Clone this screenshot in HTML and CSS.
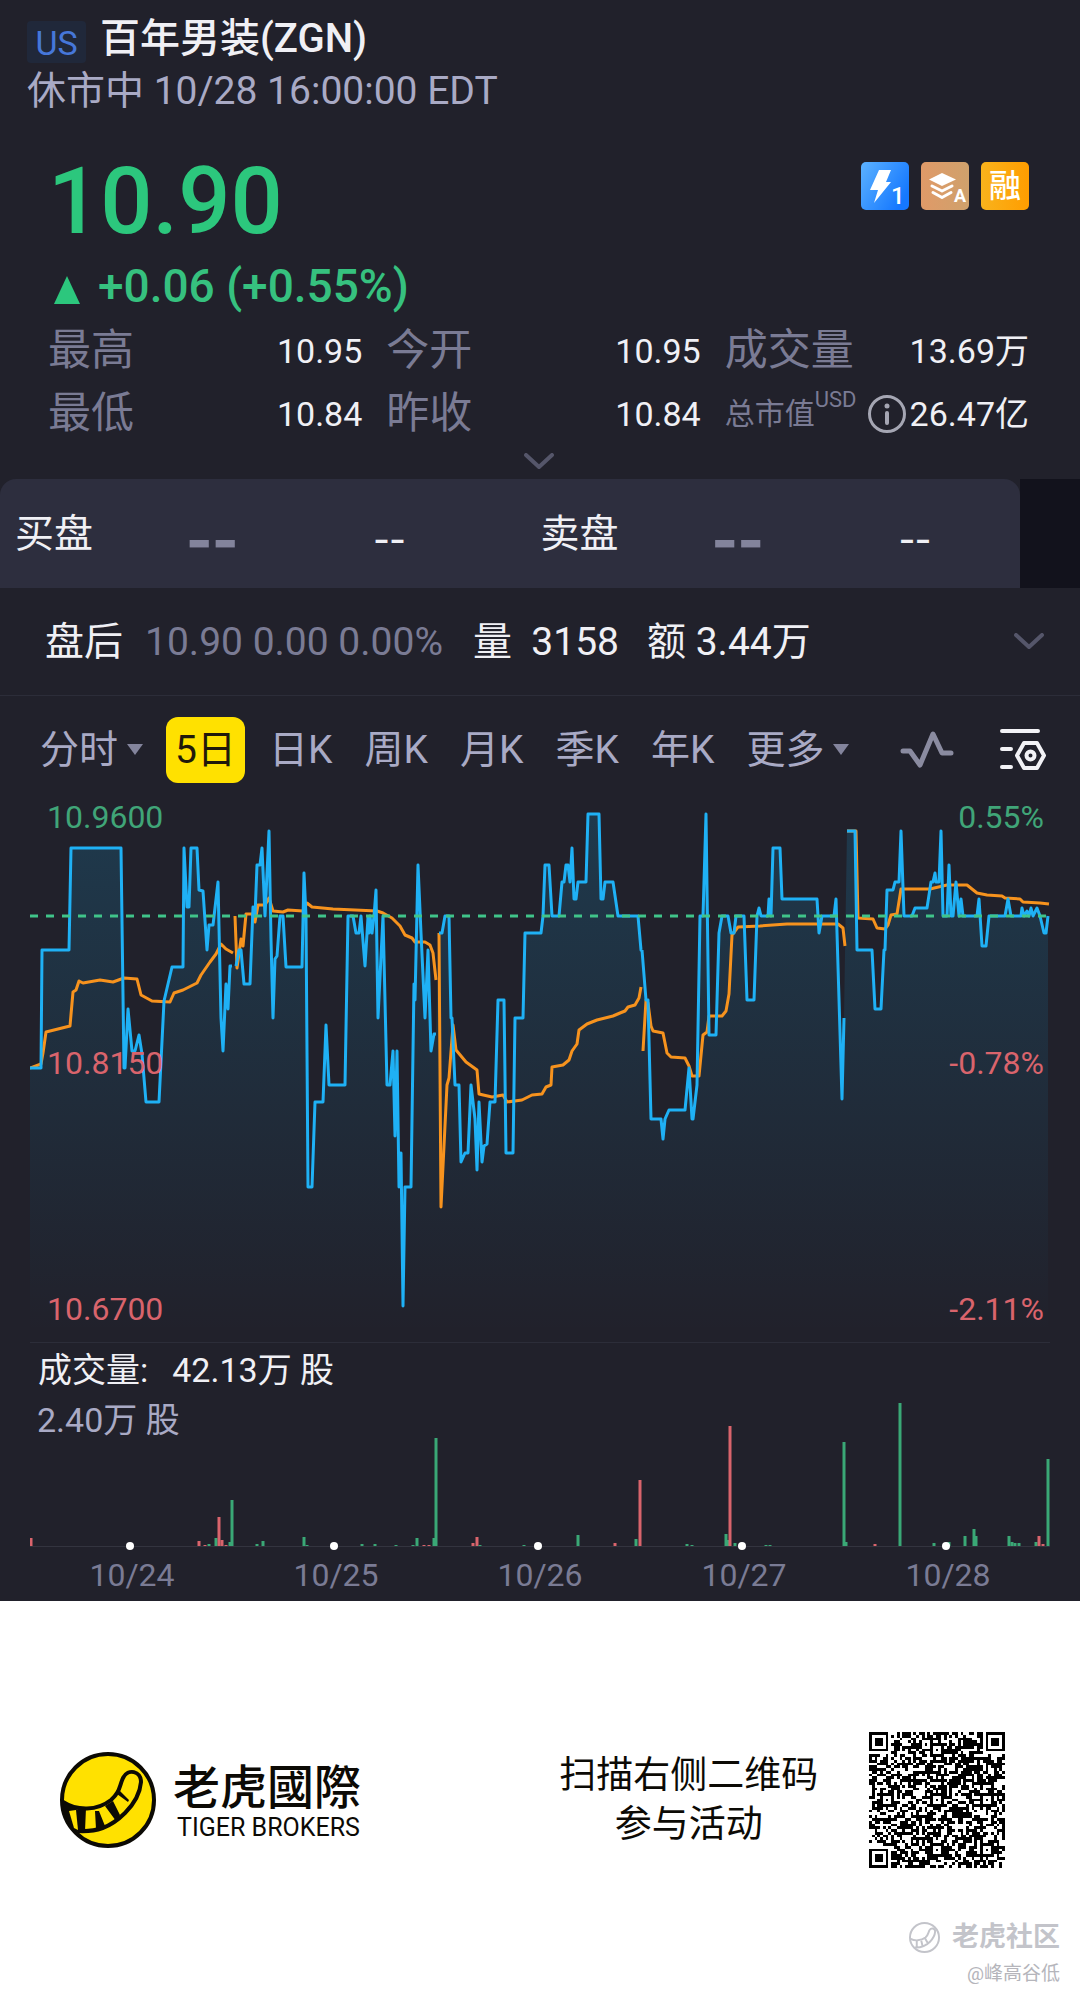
FILE: index.html
```
<!DOCTYPE html>
<html lang="zh-CN">
  <head>
    <meta charset="UTF-8" />
    <meta name="viewport" content="width=device-width, initial-scale=1" />
    <title>百年男装(ZGN)</title>
    <link rel="stylesheet" href="styles.css">
  </head>
  <body>
    <main class="stock">
      <!-- Name and market status -->
      <header class="stock-header">
        <div class="title-row">
          <span class="market">US</span>
          <h1>百年男装(ZGN)</h1>
        </div>
        <div class="status">休市中 10/28 16:00:00 EDT</div>
      </header>

      <!-- Quote -->
      <section class="quote">
        <div class="price-row">
          <div class="price">10.90</div>
          <div class="badges">
            <svg class="badge" viewBox="0 0 48 48">
              <defs>
                <linearGradient id="blue" x1="0" y1="0" x2="1" y2="0.6">
                  <stop offset="0" stop-color="#5cb2ff" />
                  <stop offset="1" stop-color="#1578ff" />
                </linearGradient>
              </defs>
              <rect width="48" height="48" rx="5" fill="url(#blue)" />
              <path d="M18 8h12l-5 12h5L13 41l4-13h-8z" fill="#fff" />
              <text x="30" y="42" font-size="24" font-weight="500" fill="#fff">1</text>
            </svg>
            <svg class="badge" viewBox="0 0 48 48">
              <defs>
                <linearGradient id="bronze" x1="0" y1="0" x2="1" y2="0">
                  <stop offset="0" stop-color="#e09a68" />
                  <stop offset="1" stop-color="#cfa16c" />
                </linearGradient>
              </defs>
              <rect width="48" height="48" rx="5" fill="url(#bronze)" />
              <path d="M21 11l14 6.5L21 24 8 17.5z" fill="#fff" />
              <path d="M11 24l10 5 10-5M12 30.500l9 5 9-5" fill="none" stroke="#fff" stroke-width="3" stroke-linecap="round" stroke-linejoin="round" />
              <text x="33" y="40" font-size="18" font-weight="700" fill="#fff">A</text>
            </svg>
            <span class="badge margin-badge">融</span>
          </div>
        </div>
        <div class="change"><span class="up"></span>+0.06 (+0.55%)</div>
        <dl class="stats">
          <div><dt>最高</dt><dd>10.95</dd></div>
          <div><dt>今开</dt><dd>10.95</dd></div>
          <div><dt>成交量</dt><dd>13.69万</dd></div>
          <div><dt>最低</dt><dd>10.84</dd></div>
          <div><dt>昨收</dt><dd>10.84</dd></div>
          <div>
            <dt class="small">总市值<sup>USD</sup></dt>
            <dd class="with-icon">
              <svg class="info" viewBox="0 0 40 40">
                <circle cx="20" cy="20" r="17.500" fill="none" stroke="#a5a6b3" stroke-width="3" />
                <circle cx="20" cy="12" r="2.500" fill="#a5a6b3" />
                <path d="M20 19v10" stroke="#a5a6b3" stroke-width="4" stroke-linecap="round" />
              </svg>26.47亿
            </dd>
          </div>
        </dl>
        <button class="expand" aria-label="展开">
          <svg class="chevron" viewBox="0 0 30 18"><path d="M2 2l13 12L28 2" /></svg>
        </button>
      </section>

      <!-- Bid / ask -->
      <section class="depth">
        <div class="depth-main">
          <div class="side"><span>买盘</span><b>--</b><i>--</i></div>
          <div class="side"><span>卖盘</span><b>--</b><i>--</i></div>
        </div>
      </section>

      <section class="after-hours">
        <span class="label">盘后</span>
        <span class="muted">10.90 0.00 0.00%</span>
        <span class="vol">量&nbsp; 3158</span>
        <span>额 3.44万</span>
        <button class="more" aria-label="更多">
          <svg class="chevron" viewBox="0 0 30 18"><path d="M2 2l13 12L28 2" /></svg>
        </button>
      </section>

      <nav class="tabs">
        <button class="drop">分时</button>
        <button class="active">5日</button>
        <button>日K</button>
        <button>周K</button>
        <button>月K</button>
        <button>季K</button>
        <button>年K</button>
        <button class="drop">更多</button>
        <div class="tools">
          <button aria-label="指标">
            <svg width="54" height="40" viewBox="0 0 54 40"><path d="M3 21h7l10 14L33 4l9 19h9" fill="none" stroke="#8a8ba0" stroke-width="5" stroke-linecap="round" stroke-linejoin="round" /></svg>
          </button>
          <button aria-label="设置">
            <svg width="48" height="44" viewBox="0 0 48 44" fill="none" stroke="#f2f2f6" stroke-width="4" stroke-linecap="round" stroke-linejoin="round">
              <path d="M3 3h36M3 21h9M3 39h9M25 15h13l7 12.500L38 40H25l-7-12.500z" />
              <circle cx="31.500" cy="27.500" r="4" />
            </svg>
          </button>
        </div>
      </nav>

      <!-- Five day chart -->
      <section class="chart">
        <svg class="plot" viewBox="30 806 1020 537">
          <defs>
            <linearGradient id="fade" gradientUnits="userSpaceOnUse" x1="0" y1="815" x2="0" y2="1335">
              <stop offset="0" stop-color="#13b0f0" stop-opacity="0.17" />
              <stop offset="1" stop-color="#13b0f0" stop-opacity="0" />
            </linearGradient>
          </defs>
          <g id="area"></g>
          <g id="average"></g>
          <g id="price"></g>
          <path class="baseline" d="M30 917H1049" />
        </svg>
        <span class="tick left top up-text">10.9600</span>
        <span class="tick left mid">10.8150</span>
        <span class="tick left bottom">10.6700</span>
        <span class="tick right top up-text">0.55%</span>
        <span class="tick right mid">-0.78%</span>
        <span class="tick right bottom">-2.11%</span>
      </section>

      <section class="volume">
        <div class="volume-total"><span>成交量:</span><span>42.13万 股</span></div>
        <div class="volume-max">2.40万 股</div>
        <svg id="bars" viewBox="30 1398 1020 152"></svg>
        <div class="dates">
          <span>10/24</span>
          <span>10/25</span>
          <span>10/26</span>
          <span>10/27</span>
          <span>10/28</span>
        </div>
      </section>
    </main>

    <footer class="share">
      <div class="brand">
        <svg class="logo" viewBox="0 0 96 96">
          <circle cx="48" cy="48" r="46" fill="#ffe100" stroke="#0c0a05" stroke-width="4" />
          <path d="M3 50C17 59 37 59 51 48C60 40 59 35 63 26C68 16 81 19 81 30C80 42 73 53 65 61C50 76 36 80 18 79" fill="none" stroke="#0c0a05" stroke-width="4" />
          <path d="M3 50l15 8 8 21-9 1C8 73 3 63 3 50z" fill="#0c0a05" />
          <path d="M9 59l7-1 2 20-4-2z" fill="#ffe100" />
          <path d="M18 56h8l-1 23h-7zM35 59l4 0 6 15-9 3zM45 54l8-5 7 14-4 6zM57 42l3-3 9 9-1 2z" fill="#0c0a05" />
        </svg>
        <div class="brand-name">
          <strong>老虎國際</strong>
          <span>TIGER BROKERS</span>
        </div>
      </div>
      <p class="scan">扫描右侧二维码<br>参与活动</p>
      <svg id="qr" viewBox="0 0 49 49" shape-rendering="crispEdges"></svg>
      <div class="watermark">
        <div class="community">
          <svg viewBox="0 0 96 96" fill="none" stroke="#c3c4ca" stroke-width="6">
            <circle cx="48" cy="48" r="45" />
            <path d="M5 52C17 59 37 59 51 48C60 40 59 35 63 26C68 16 81 19 81 30C80 42 73 53 65 61C50 76 36 80 18 79M24 57v20M38 58l4 16M50 51l8 14" />
          </svg>
          <strong>老虎社区</strong>
        </div>
        <span>@峰高谷低</span>
      </div>
    </footer>
    <script src="chart.js"></script>
  </body>
</html>
```
FILE: styles.css
```
* {
  box-sizing: border-box;
}

body {
  margin: 0;
  background-color: #fff;
  color: #f0f0f5;
  font-family: Roboto, 'Noto Sans CJK SC', sans-serif;
}

button {
  padding: 0;
  border: 0;
  background: none;
  color: inherit;
  font: inherit;
  cursor: pointer;
}

svg {
  display: block;
}

.stock {
  background-color: #21212b;
}

.stock-header {
  padding: 15px 27px 0;
}

.title-row {
  display: flex;
  align-items: center;
  height: 48px;
}

.market {
  width: 59px;
  height: 42px;
  margin: 6px 14px 0 0;
  border-radius: 4px;
  background-color: #20283a;
  color: #4677d9;
  font-size: 34px;
  line-height: 44px;
  text-align: center;
}

h1 {
  margin: 0;
  font-size: 40px;
  font-weight: 500;
  line-height: 48px;
}

.status {
  color: #a9aac5;
  font-size: 39px;
  line-height: 56px;
}

/* Quote */
.quote {
  padding: 33px 51px 0 48px;
}

.price-row {
  display: flex;
  justify-content: space-between;
}

.price {
  color: #2cc77d;
  font-size: 92px;
  font-weight: 500;
  line-height: 100px;
}

.badges {
  display: flex;
  gap: 12px;
  padding-top: 10px;
}

.badge {
  width: 48px;
  height: 48px;
}

.margin-badge {
  border-radius: 5px;
  background: linear-gradient(90deg, #f9b31c, #ff9d00);
  color: #fff;
  font-size: 32px;
  font-weight: 500;
  line-height: 48px;
  text-align: center;
}

.change {
  display: flex;
  align-items: center;
  height: 67px;
  padding-left: 6px;
  color: #36c17f;
  font-size: 46px;
  font-weight: 500;
}

.up {
  margin: 8px 18px 0 0;
  border: 13px solid transparent;
  border-top: 0;
  border-bottom: 28px solid #2cc77d;
}

.stats {
  display: grid;
  grid-template-columns: 313fr 313fr 303fr;
  column-gap: 24px;
  margin: 0;
}

.stats div {
  display: flex;
  align-items: center;
  justify-content: space-between;
  height: 63px;
  white-space: nowrap;
}

.stats dt {
  color: #7a7b94;
  font-size: 43px;
  line-height: 63px;
}

.stats .small {
  font-size: 30px;
}

.stats sup {
  font-size: 22px;
  line-height: 0;
  vertical-align: 17px;
}

.stats dd {
  margin: 0;
  font-size: 34px;
  line-height: 60px;
}

.with-icon {
  display: flex;
  align-items: center;
}

.info {
  width: 40px;
  height: 40px;
  margin-right: 3px;
}

.expand {
  display: block;
  height: 34px;
  margin: 0 auto;
}

.chevron {
  width: 30px;
  height: 18px;
  fill: none;
  stroke: #55566a;
  stroke-width: 4px;
  stroke-linecap: round;
  stroke-linejoin: round;
}

/* Bid and ask */
.depth {
  padding-right: 60px;
  background: linear-gradient(270deg, #12121c 60px, #21212b 60px);
}

.depth-main {
  display: grid;
  grid-template-columns: 1fr 1fr;
  column-gap: 51px;
  height: 109px;
  padding: 0 5px 0 15px;
  border-radius: 16px 16px 0 0;
  background-color: #2d2e3e;
}

.side {
  display: grid;
  grid-template-columns: 120fr 154fr 200fr;
  align-items: center;
  font-size: 39px;
  line-height: 60px;
  text-align: center;
}

.side span {
  text-align: left;
}

.side b,
.side i {
  font-family: 'Noto Sans CJK SC', sans-serif;
}

.side b {
  color: #83849c;
  font-size: 70px;
  line-height: 56px;
}

.side i {
  font-size: 46px;
  font-style: normal;
  line-height: 56px;
}

.after-hours {
  display: flex;
  align-items: center;
  height: 108px;
  padding: 0 36px 0 45px;
  border-bottom: 1px solid #2c2d39;
  font-size: 39px;
  line-height: 60px;
}

.after-hours .muted {
  margin: 0 30px 0 22px;
  color: #7a7b94;
}

.after-hours .vol {
  margin-right: 28px;
}

.more {
  margin-left: auto;
}

/* Period tabs */
.tabs {
  display: flex;
  align-items: center;
  gap: 32px;
  height: 109px;
  padding: 0 33px 2px 40px;
  color: #a9aac5;
  font-size: 39px;
  line-height: 60px;
}

.tabs .drop {
  display: flex;
  align-items: center;
}

.tabs .drop::after {
  content: '';
  margin-left: 9px;
  border: 8px solid transparent;
  border-top: 11px solid #83849c;
  border-bottom: 0;
}

.tabs .active {
  width: 79px;
  height: 66px;
  margin: 0 -8px 0 -9px;
  border-radius: 12px;
  background-color: #ffe100;
  color: #21190a;
}

.tools {
  display: flex;
  align-items: center;
  gap: 45px;
  margin-left: auto;
}

/* Price chart */
.chart {
  position: relative;
  margin: 0 30px;
  border-bottom: 1px solid #2c2d39;
}

.plot {
  width: 100%;
}

.plot path {
  fill: none;
  stroke-width: 3px;
  stroke-linejoin: round;
}

#area path {
  fill: url(#fade);
}

#average path {
  stroke: #f7931e;
}

#price path {
  stroke: #1fb1f5;
}

.plot .baseline {
  stroke: #40c48a;
  stroke-dasharray: 8 8;
}

.tick {
  position: absolute;
  color: #d9646c;
  font-size: 32px;
  line-height: 36px;
}

.up-text {
  color: #40a578;
}

.left {
  left: 17px;
}

.right {
  right: 6px;
}

.top {
  top: -6px;
}

.mid {
  top: 240px;
}

.bottom {
  bottom: 15px;
}

/* Volume */
.volume {
  margin: 0 30px;
}

.volume-total {
  display: flex;
  gap: 24px;
  padding-left: 8px;
  font-size: 34px;
  line-height: 55px;
}

/* the tallest bars reach up beside this line */
.volume-max {
  width: fit-content;
  height: 44px;
  margin-bottom: -44px;
  padding-left: 7px;
  color: #a9aac5;
  font-size: 34px;
  line-height: 44px;
}

#bars {
  width: 100%;
}

.dates {
  display: grid;
  grid-template-columns: repeat(5, 1fr);
  color: #7a7b94;
  font-size: 32px;
  line-height: 51px;
  text-align: center;
}

/* Share footer */
.share {
  position: relative;
  display: grid;
  grid-template-columns: 449fr 361fr 136px;
  align-items: center;
  height: 398px;
  padding: 0 75px 0 60px;
  color: #0c0a05;
}

.brand {
  display: flex;
  align-items: center;
  gap: 17px;
}

.logo {
  width: 96px;
  height: 96px;
}

.brand-name strong,
.brand-name span {
  display: block;
}

.brand-name strong {
  font-family: 'Noto Sans CJK TC', sans-serif;
  font-size: 47px;
  font-weight: 500;
  line-height: 56px;
}

.brand-name span {
  padding-left: 4px;
  font-size: 25px;
  line-height: 32px;
}

.scan {
  margin: 0;
  font-size: 37px;
  line-height: 49px;
  text-align: center;
}

#qr {
  width: 136px;
  height: 136px;
}

.watermark {
  position: absolute;
  right: 20px;
  bottom: 10px;
  color: #b5b5bb;
  font-size: 19px;
  line-height: 30px;
  text-align: right;
}

.community {
  display: flex;
  align-items: center;
  gap: 12px;
  color: #c3c4ca;
  font-size: 27px;
  line-height: 44px;
}

.community svg {
  width: 31px;
  height: 31px;
}
```
FILE: chart.js
```
const SVG = 'http://www.w3.org/2000/svg'

function add(parent, name, attrs) {
  const el = document.createElementNS(SVG, name)
  for (const key in attrs) el.setAttribute(key, attrs[key])
  document.getElementById(parent).appendChild(el)
}

// One string per trading day: x,y x,y ...
const price = [
  '30,1069 41,1069 42,951 69,951 71,849 121,849 124,1069 125,1069 128,1010 132,1052 135,1052 139,1036 142,1055 146,1103 159,1103 164,1002 172,968 183,968 184,849 187,908 189,908 191,849 197,849 199,891 203,892 207,951 209,926 213,926 218,883 221,1019 223,1052 226,985 228,1010 230,967 232,967',
  '236,967 239,951 241,951 244,985 250,985 253,908 255,917 257,866 260,866 262,849 265,917 269,832 271,940 273,1019 275,960 277,957 280,917 283,917 286,968 302,968 304,874 306,917 308,1188 312,1188 315,1103 323,1103 326,1026 329,1086 345,1086 348,917 353,917 356,934 359,934 361,917 365,967 368,918 369,934 370,917 372,934 374,917 376,891 378,1019 383,917 387,1086 390,1086 393,1052 395,1137 397,1052 399,1188 401,1154 403,1307 405,1188 411,1188 414,985 415,1001 418,866 421,934 425,1019 428,951 431,1052 434,1035 436,1035',
  '439,934 442,934 445,917 449,917 451,1019 452,1019 455,1086 459,1086 461,1163 465,1154 468,1154 471,1086 475,1120 477,1171 479,1103 482,1163 484,1147 487,1145 490,1103 495,1103 498,1001 504,1001 506,1154 513,1154 515,1019 523,1019 525,934 541,934 543,917 545,866 549,866 552,917 559,917 562,883 564,883 566,866 568,866 570,883 572,849 574,900 576,900 578,883 586,883 588,815 599,815 601,900 603,900 605,883 613,883 618,917 638,917 641,951 642,951',
  '642,951 646,1001 648,1001 651,1120 661,1120 663,1140 665,1120 669,1111 685,1111 689,1069 692,1120 693,1120 697,1086 700,917 703,917 706,815 709,1036 716,1036 719,934 722,917 728,917 731,934 734,934 736,917 744,917 747,1001 754,1001 757,917 759,909 761,917 768,917 769,900 771,917 773,849 780,849 782,900 817,900 819,934 822,917 834,917 836,900 842,1100 844,1019',
  '847,832 855,832 857,951 872,951 875,1010 881,1010 884,951 885,951 887,891 893,891 895,883 899,883 901,832 904,917 912,917 915,909 927,909 931,883 933,883 935,874 936,883 939,883 941,832 943,917 947,917 949,866 951,917 953,917 956,883 959,917 961,900 963,917 977,917 979,900 982,947 986,947 989,917 1005,917 1008,900 1011,917 1021,917 1022,909 1024,917 1027,912 1029,917 1031,909 1033,917 1037,909 1040,917 1044,934 1046,934 1048,917',
]

const average = [
  '30,1069 41,1065 43,1054 46,1033 70,1027 73,993 76,991 79,982 83,984 100,981 113,983 124,979 137,980 141,996 152,1002 170,1003 174,994 183,991 197,984 201,976 210,963 216,955 221,945 226,950 233,954',
  '235,917 237,969 241,940 243,947 246,915 252,915 255,923 258,906 265,906 269,899 273,912 283,913 288,911 303,912 307,904 312,908 333,910 377,912 383,914 392,919 400,927 405,936 412,939 415,943 425,943 430,946 433,954 436,981',
  '439,934 441,1208 447,1086 449,1079 453,1026 456,1051 466,1063 477,1071 479,1095 492,1098 503,1096 507,1103 522,1101 532,1096 542,1095 546,1088 551,1086 552,1068 563,1066 569,1061 572,1052 577,1045 579,1031 587,1025 597,1021 613,1017 620,1014 625,1012 628,1008 635,1006 639,999 641,988',
  '643,1052 646,1001 648,1004 651,1027 653,1032 663,1034 667,1054 671,1058 685,1059 689,1067 692,1077 699,1077 703,1036 707,1033 709,1017 722,1017 726,1012 729,995 732,936 738,928 760,927 787,925 838,925 843,929 845,947',
  '847,832 856,832 858,919 873,920 877,929 885,930 888,926 891,916 897,915 901,890 930,890 947,886 967,886 977,894 987,896 1002,897 1005,899 1020,900 1023,903 1040,904 1049,905',
]

add('area', 'path', { d: `M30 1335L${price.join(' ')}V1335Z` })
average.forEach(day => add('average', 'path', { d: 'M' + day }))
price.forEach(day => add('price', 'path', { d: 'M' + day }))

// Volume bars: x, height, 1 = up / 0 = down
const green = '#3aa876'
const red = '#d9646c'
const bars = [
  [31, 8, 0], [199, 5, 0], [205, 1, 0], [209, 2, 1], [216, 8, 1], [219, 29, 0], [222, 6, 0],
  [226, 1, 0], [230, 4, 1], [232, 46, 1], [257, 2, 1], [263, 5, 1], [304, 9, 1], [307, 1, 1],
  [362, 2, 1], [375, 2, 1], [396, 1, 1], [413, 1, 1], [417, 8, 1], [424, 1, 0], [429, 1, 0],
  [434, 8, 1], [436, 108, 1], [473, 3, 0], [477, 9, 0], [480, 1, 1], [524, 1, 1], [578, 11, 1],
  [615, 3, 0], [636, 7, 1], [640, 66, 0], [687, 2, 1], [692, 1, 1], [726, 12, 1], [728, 6, 1],
  [730, 120, 0], [735, 3, 1], [766, 1, 1], [770, 1, 1], [844, 104, 1], [846, 4, 1], [875, 2, 0],
  [900, 143, 1], [934, 3, 1], [949, 4, 1], [965, 10, 1], [974, 17, 1], [976, 10, 1], [1009, 10, 1],
  [1012, 4, 1], [1015, 3, 1], [1019, 3, 1], [1036, 4, 1], [1039, 10, 0], [1043, 2, 0], [1048, 87, 1],
]
add('bars', 'path', { d: 'M30 1546.500H1050', stroke: '#33343f' })
bars.forEach(([x, h, up]) => {
  add('bars', 'rect', { x: x - 1.5, y: 1546 - h, width: 3, height: h, fill: up ? green : red })
})
for (let x = 130; x < 1000; x += 204) {
  add('bars', 'circle', { cx: x, cy: 1546, r: 4, fill: '#fff' })
}

// QR code, 49 modules wide
const size = 49
let seed = 8
let d = ''

function ring(x, y, cx, cy) {
  return Math.max(Math.abs(x - cx), Math.abs(y - cy))
}

for (let y = 0; y < size; y++) {
  for (let x = 0; x < size; x++) {
    seed = (seed * 1103515245 + 12345) % 2147483648
    let on = seed / 2147483648 < 0.56
    for (const [cx, cy] of [[6, 24], [24, 6], [24, 24], [42, 24], [24, 42], [42, 42]]) {
      const r = ring(x, y, cx, cy)
      if (r <= 2) on = r !== 1
    }
    for (const [cx, cy] of [[3, 3], [45, 3], [3, 45]]) {
      const r = ring(x, y, cx, cy)
      if (r <= 4) on = r !== 2 && r !== 4
    }
    if (on) d += `M${x} ${y}h1v1h-1z`
  }
}
add('qr', 'path', { d })
```
